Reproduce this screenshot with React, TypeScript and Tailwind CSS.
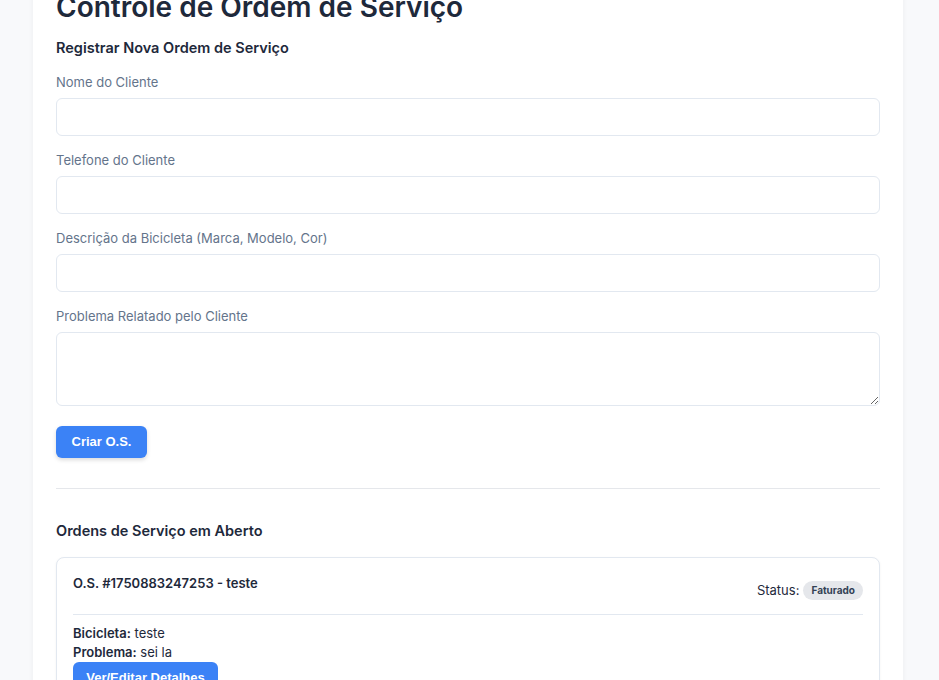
export default function App() {
  const labelCls = "block text-[13px] leading-5 text-[#64748b] mb-1.5";
  const inputCls = "block w-full h-[38px] rounded-md border border-[#e2e8f0] bg-white px-3 text-sm";

  return (
    <div className="min-h-screen bg-[#f8f9fb] font-['Inter',sans-serif] text-[#1e293b] overflow-hidden h-[680px]">
      <div className="ml-[33px] w-[870px] -mt-[30px] bg-white px-[23px] pt-[20px] pb-10 shadow-[0_0_6px_rgba(0,0,0,0.05)]">
        <h1 className="text-[28px] leading-[34px] font-semibold text-[#1e293b]">Controle de Ordem de Serviço</h1>

        <h2 className="mt-[13px] text-[14.5px] leading-[22px] font-semibold">Registrar Nova Ordem de Serviço</h2>

        <form className="mt-[13px]">
          <div className="mb-[14px]">
            <label className={labelCls}>Nome do Cliente</label>
            <input className={inputCls} />
          </div>
          <div className="mb-[14px]">
            <label className={labelCls}>Telefone do Cliente</label>
            <input className={inputCls} />
          </div>
          <div className="mb-[14px]">
            <label className={labelCls}>Descrição da Bicicleta (Marca, Modelo, Cor)</label>
            <input className={inputCls} />
          </div>
          <div>
            <label className={labelCls}>Problema Relatado pelo Cliente</label>
            <textarea className="block w-full h-[74px] rounded-md border border-[#e2e8f0] bg-white px-3 py-2 text-sm" />
          </div>
          <button
            type="button"
            className="mt-5 h-8 w-[91px] rounded-md bg-[#3b82f6] font-['Liberation_Sans',Arial,sans-serif] text-[13px] font-bold text-white shadow-[0_2px_4px_rgba(0,0,0,0.15)]"
          >
            Criar O.S.
          </button>
        </form>

        <hr className="mt-[30px] border-t border-[#e5e7eb]" />

        <h2 className="mt-[31px] text-[14.5px] leading-[22px] font-semibold">Ordens de Serviço em Aberto</h2>

        <div className="mt-[15px] rounded-lg border border-[#e2e8f0] bg-white px-4 pt-4 shadow-[0_1px_3px_rgba(0,0,0,0.05)]">
          <div className="flex justify-between border-b border-[#e2e8f0] pb-[13px]">
            <div className="text-[13px] leading-[18px] font-semibold">O.S. #1750883247253 - teste</div>
            <div className="mt-[7px] flex items-center gap-1 text-[13px] text-[#1e293b]">
              <span>Status:</span>
              <span className="rounded-full bg-[#e5e7eb] px-2 py-[3px] text-[10px] leading-[13px] font-bold text-[#334155]">Faturado</span>
            </div>
          </div>
          <div className="pt-[9px] text-[13px] leading-[19px]">
            <p><strong className="font-semibold">Bicicleta:</strong> teste</p>
            <p><strong className="font-semibold">Problema:</strong> sei la</p>
            <button
              type="button"
              className="h-8 w-[145px] rounded-md bg-[#3b82f6] font-['Liberation_Sans',Arial,sans-serif] text-[13px] font-bold text-white"
            >
              Ver/Editar Detalhes
            </button>
          </div>
        </div>
      </div>
    </div>
  );
}
